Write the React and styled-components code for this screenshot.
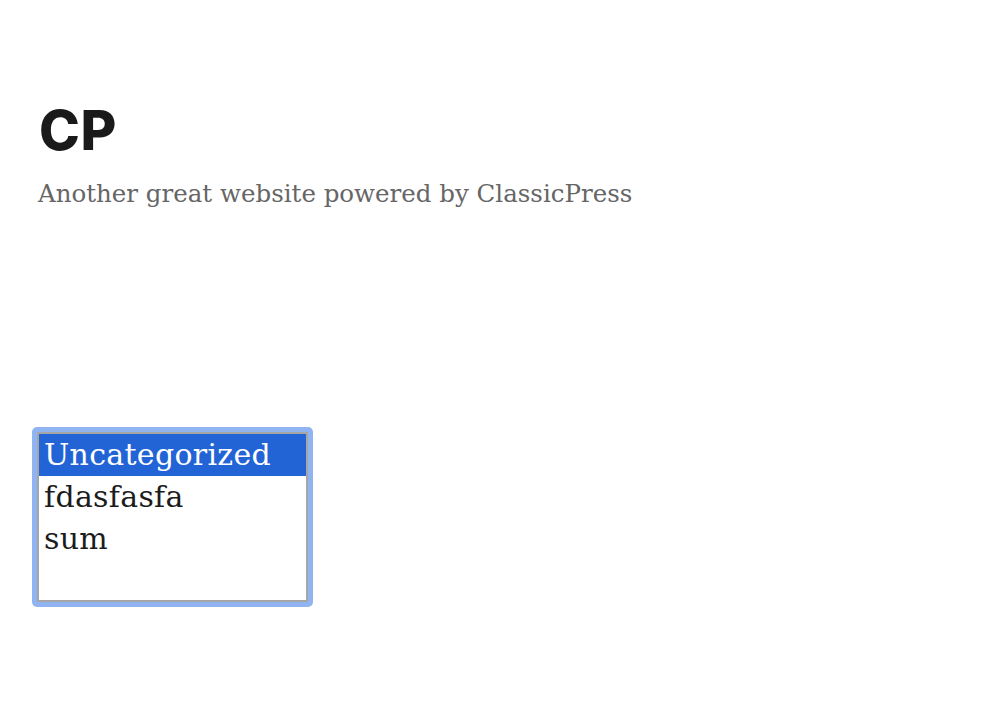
import styled, { createGlobalStyle } from 'styled-components';

const GlobalStyle = createGlobalStyle`
    body {
        margin: 0;
        background: #fff;
        font-family: "DejaVu Serif", "Liberation Serif", serif;
    }
`;

const categories = ['Uncategorized', 'fdasfasfa', 'sum'];

export default function App() {
    return (
        <>
            <GlobalStyle />
            <Page>
                <Header>
                    <SiteTitle>CP</SiteTitle>
                    <Tagline>Another great website powered by ClassicPress</Tagline>
                </Header>
                <FocusRing>
                    <ListBox role='listbox'>
                        {categories.map((name, i) => (
                            <Option key={name} $selected={i === 0}>
                                {name}
                            </Option>
                        ))}
                    </ListBox>
                </FocusRing>
            </Page>
        </>
    );
}

const Page = styled.div`
    display: flex;
    flex-direction: column;
    align-items: flex-start;
    padding: 96px 38px 0 32px;
`;

const Header = styled.header`
    display: flex;
    flex-direction: column;
    gap: 14px;
    padding-left: 6px;
`;

const SiteTitle = styled.h1`
    margin: 0 0 0 1px;
    font-family: Inter, "Liberation Sans", sans-serif;
    font-weight: 800;
    font-size: 55px;
    line-height: 68px;
    color: #1a1a1a;
    letter-spacing: 0.5px;
`;

const Tagline = styled.p`
    margin: 0;
    font-size: 24.5px;
    line-height: 32px;
    color: #666;
    white-space: nowrap;
`;

const FocusRing = styled.div`
    margin-top: 217px;
    padding: 5px;
    background: #90b4f2;
    border-radius: 5px;
`;

const ListBox = styled.div`
    width: 267px;
    height: 166px;
    border: 2px solid #a6a6a6;
    background: #fff;
    box-sizing: content-box;
`;

const Option = styled.div`
    height: 42px;
    line-height: 42px;
    padding-left: 5px;
    font-size: 30px;
    letter-spacing: 0.3px;
    color: ${(p) => (p.$selected ? '#fff' : '#1c1c1c')};
    background: ${(p) => (p.$selected ? '#2264d6' : 'transparent')};
    white-space: nowrap;
`;
